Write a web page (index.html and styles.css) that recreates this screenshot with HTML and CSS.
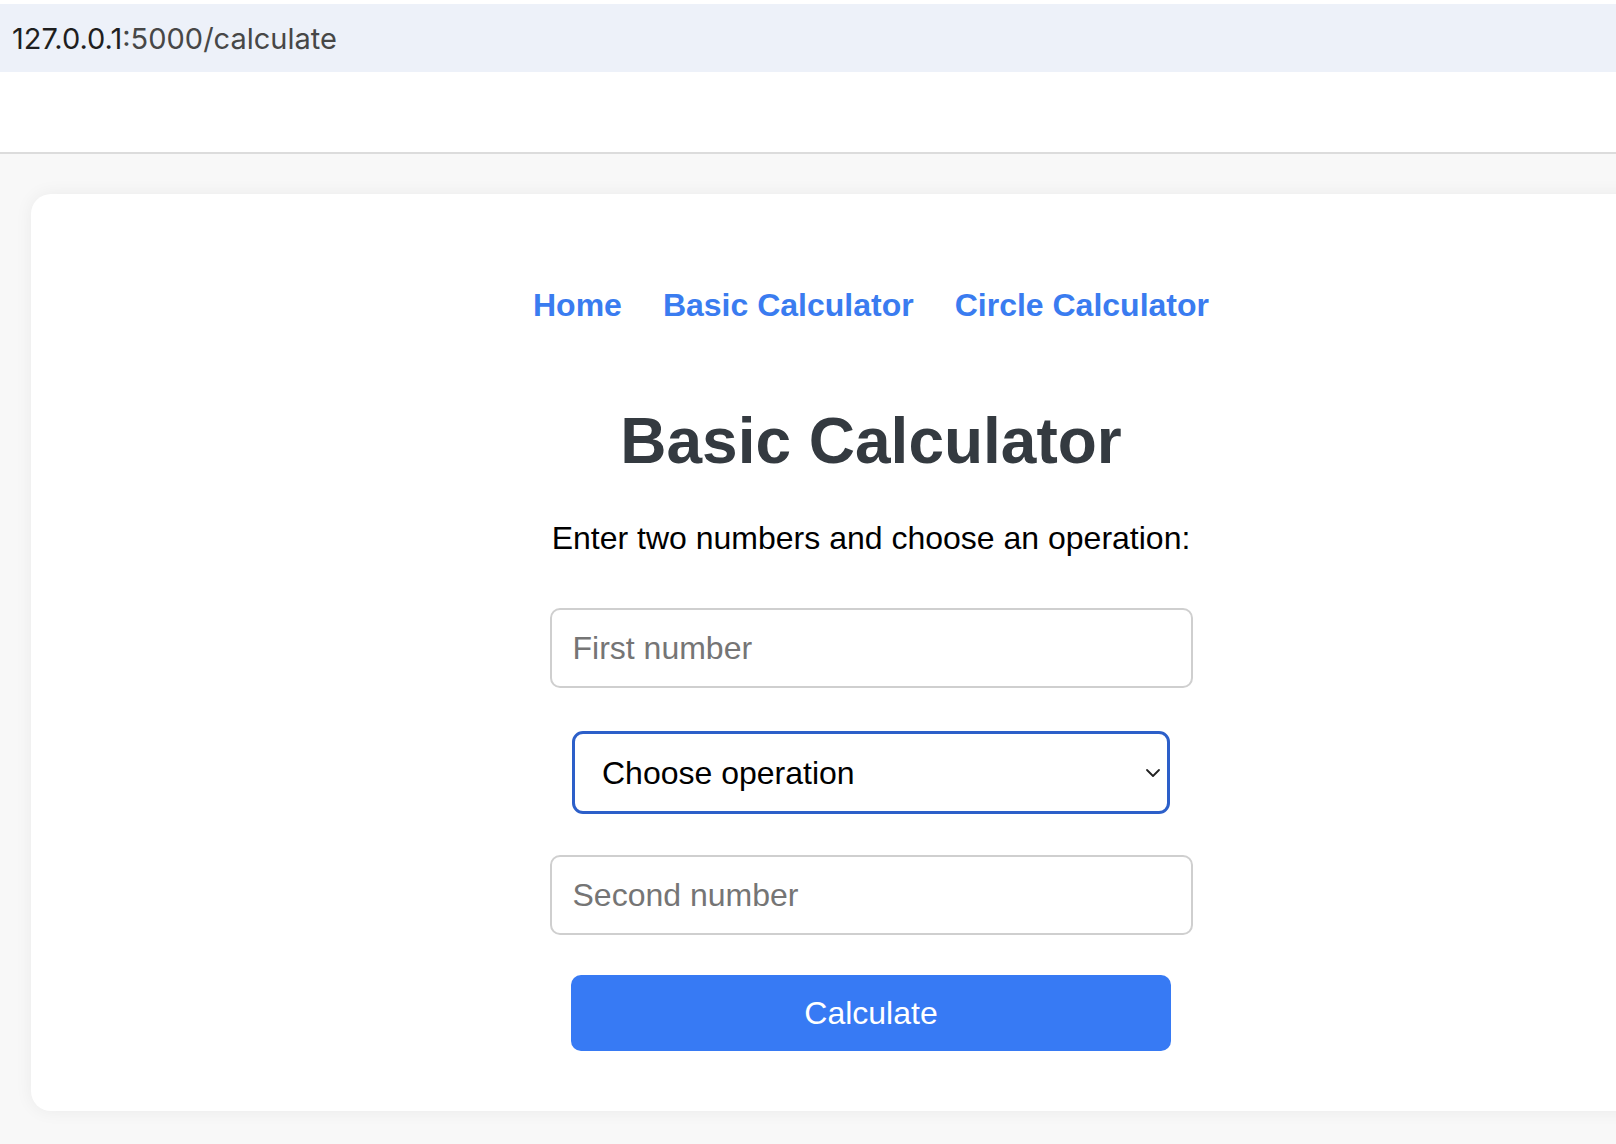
FILE: index.html
```html
<!DOCTYPE html>
<html lang="en">
<head>
<meta charset="utf-8">
<title>Basic Calculator</title>
<link rel="stylesheet" href="styles.css">
</head>
<body>
<div class="urlbar"><span class="host">127.0.0.1</span><span class="path">:5000/calculate</span></div>
<div class="toolbar"></div>
<main class="page">
  <div class="card">
    <nav class="nav">
      <a href="#">Home</a>
      <a href="#">Basic Calculator</a>
      <a href="#">Circle Calculator</a>
    </nav>
    <h1 class="title">Basic Calculator</h1>
    <p class="lead">Enter two numbers and choose an operation:</p>
    <form class="form">
      <input class="field first" type="text" placeholder="First number">
      <div class="select-wrap">
        <select class="select">
          <option>Choose operation</option>
          <option>Add</option>
          <option>Subtract</option>
          <option>Multiply</option>
          <option>Divide</option>
        </select>
        <svg class="chevron" width="16" height="10" viewBox="0 0 16 10"><path d="M2 2 L8 8 L14 2" fill="none" stroke="#222" stroke-width="1.8" stroke-linecap="round" stroke-linejoin="round"/></svg>
      </div>
      <input class="field second" type="text" placeholder="Second number">
      <button class="btn" type="button">Calculate</button>
    </form>
  </div>
</main>
</body>
</html>
```

FILE: styles.css
```css
html, body {
  margin: 0;
  padding: 0;
  background: #f8f8f8;
  overflow: hidden;
}
body {
  width: 1616px;
  height: 1144px;
  font-family: "Liberation Sans", Arial, sans-serif;
}
.urlbar {
  margin-top: 4px;
  height: 68px;
  background: #edf1f9;
  display: flex;
  align-items: center;
  padding-left: 12px;
  font-family: Inter, "Liberation Sans", sans-serif;
  font-size: 29px;
  box-shadow: 0 -4px 0 #ffffff;
}
.host { color: #1f1f1f; }
.path { color: #474747; }
.toolbar {
  height: 80px;
  background: #ffffff;
  border-bottom: 2px solid #dcdcdc;
}
.page {
  padding-top: 40px;
  padding-left: 31px;
}
.card {
  width: 1680px;
  background: #ffffff;
  border-radius: 20px;
  box-shadow: 0 0 18px rgba(0, 0, 0, 0.06);
  padding: 93px 0 60px;
  display: flex;
  flex-direction: column;
  align-items: center;
}
.nav {
  display: flex;
  gap: 41px;
  font-size: 32px;
  line-height: 37px;
  font-weight: bold;
}
.nav a {
  color: #3a7cf0;
  text-decoration: none;
}
.title {
  margin: 80px 0 0;
  font-size: 64px;
  line-height: 74px;
  font-weight: bold;
  color: #343a40;
}
.lead {
  margin: 42px 0 0;
  font-size: 32px;
  line-height: 37px;
  color: #000;
}
.form {
  margin-top: 51px;
  display: flex;
  flex-direction: column;
  align-items: center;
}
.field {
  box-sizing: border-box;
  width: 643px;
  height: 80px;
  border: 2px solid #cfcfcf;
  border-radius: 10px;
  padding: 0 21px;
  font-family: "Liberation Sans", Arial, sans-serif;
  font-size: 32px;
  color: #000;
  background: #fff;
  outline: none;
}
.field::placeholder { color: #757575; }
.select-wrap {
  position: relative;
  margin-top: 43px;
  width: 598px;
  height: 83px;
}
.select {
  box-sizing: border-box;
  width: 598px;
  height: 83px;
  border: 3px solid #2c5fc9;
  border-radius: 11px;
  padding: 0 27px;
  font-family: "Liberation Sans", Arial, sans-serif;
  font-size: 32px;
  color: #000;
  background: #fff;
  appearance: none;
  -webkit-appearance: none;
  outline: none;
}
.chevron {
  position: absolute;
  right: 9px;
  top: 37px;
  pointer-events: none;
}
.second { margin-top: 41px; }
.btn {
  margin-top: 40px;
  width: 600px;
  height: 76px;
  border: none;
  border-radius: 10px;
  background: #377af4;
  color: #fff;
  font-family: "Liberation Sans", Arial, sans-serif;
  font-size: 32px;
}
```
